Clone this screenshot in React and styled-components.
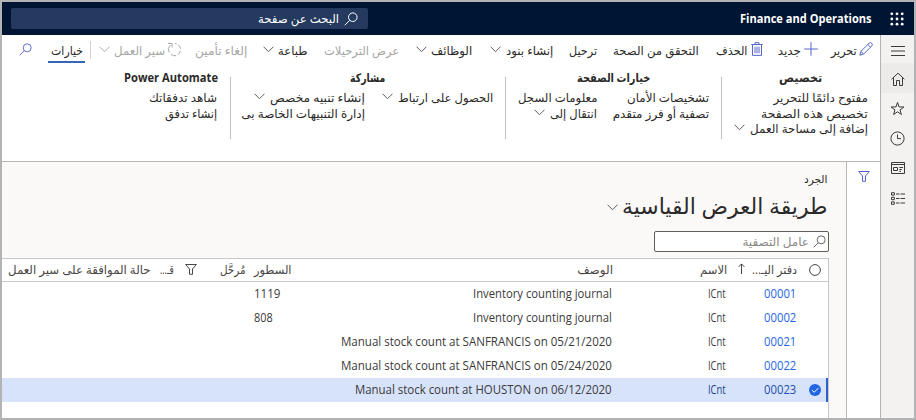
import React, { useLayoutEffect, useRef, useState } from 'react';
import styled, { createGlobalStyle, css } from 'styled-components';

const Global = createGlobalStyle`
  * { box-sizing: border-box; }
  body { margin: 0; background: #fff; overflow: hidden; }
  svg { display: block; flex: none; fill: none; stroke: currentColor; stroke-width: 1; }
`;

/* ---------- text ---------- */
const LabelBox = styled.span`
  display: block;
  flex: none;
  width: ${p => p.$w}px;
  height: 16px;
  line-height: 16px;
  margin-inline-start: ${p => p.$gap || 0}px;
  font-size: ${p => p.$size || 12}px;
  font-weight: ${p => (p.$bold ? 700 : 400)};
  color: ${p => p.$color || 'inherit'};
`;
const LabelText = styled.span`
  display: inline-block;
  white-space: nowrap;
  transform-origin: right center;
`;

function Label({ w, gap, size, bold, color, children }) {
  const ref = useRef(null);
  const [scale, setScale] = useState(1);
  useLayoutEffect(() => {
    const natural = ref.current.offsetWidth;
    if (natural) setScale(w / natural);
  }, [w, children]);
  return (
    <LabelBox $w={w} $gap={gap} $size={size} $bold={bold} $color={color}>
      <LabelText ref={ref} style={{ transform: `scaleX(${scale})` }}>{children}</LabelText>
    </LabelBox>
  );
}

/* ---------- icons ---------- */
const IconSlot = styled.span`
  display: block;
  flex: none;
  margin-inline-start: ${p => p.$gap || 0}px;
  margin-top: ${p => p.$drop || 0}px;
  color: ${p => p.$color || 'inherit'};
`;
const Chevron = ({ gap = 5, drop = -3, color = '#5c5c5c' }) => (
  <IconSlot $gap={gap} $drop={drop} $color={color}>
    <svg width="11" height="7" viewBox="0 0 11 7"><path d="M.5.7 5.5 5.7l5-5" /></svg>
  </IconSlot>
);
const SearchIcon = ({ size = 14 }) => (
  <svg width={size} height={size} viewBox="0 0 14 14"><circle cx="8.8" cy="5.2" r="4.3" /><path d="M5.7 8.3.8 13.2" /></svg>
);
const Pencil = () => (
  <svg width="14" height="14" viewBox="0 0 14 14"><path d="M.8 13.2 1.9 9.4 10 1.3a1.9 1.9 0 0 1 2.7 2.7L4.6 12.1zM1.9 9.4l2.7 2.7M8.8 2.5l2.7 2.7" /></svg>
);
const Plus = () => (
  <svg width="14" height="14" viewBox="0 0 14 14"><path d="M7 .2v13.6M.2 7h13.6" /></svg>
);
const Trash = () => (
  <svg width="12" height="14" viewBox="0 0 12 14"><path d="M.3 2.5h11.4M4 2.5V.7h4v1.8M1.5 2.5v10.9h9V2.5M4 4.7v6.6M6 4.7v6.6M8 4.7v6.6" /></svg>
);
const Cycle = () => (
  <svg width="15" height="15" viewBox="0 0 15 15"><path d="M3.2 3.2a6 6 0 0 0-.9 7.2M4 12.4a6 6 0 0 0 5 1.3M11 12.7a6 6 0 0 0 2.4-4M13.5 6.7A6 6 0 0 0 11 2.6M9.6 1.8 8 1.4M.9 1.4l4.2.1.1 4" /></svg>
);
const Funnel = () => (
  <svg width="12" height="11" viewBox="0 0 12 11"><path d="M.7.5h10.6L7.5 5v5.3h-3V5z" /></svg>
);
const Waffle = () => (
  <svg width="14" height="14" viewBox="0 0 14 14">
    {[1.8, 7, 12.2].map(y => [1.8, 7, 12.2].map(x => <circle key={`${x}-${y}`} cx={x} cy={y} r="1.4" fill="currentColor" stroke="none" />))}
  </svg>
);
const Burger = () => <svg width="14" height="12" viewBox="0 0 14 12"><path d="M0 1.5h14M0 6h14M0 10.5h14" /></svg>;
const Home = () => <svg width="14" height="14" viewBox="0 0 14 14"><path d="M.6 7.2 7 1.2l6.4 6M2.5 5.8v7.7h3v-5h3v5h3V5.8" /></svg>;
const Star = () => <svg width="15" height="15" viewBox="0 0 15 15"><path d="m7.5 1.4 1.5 4.5 4.9.1L10 8.9l1.4 4.6-3.9-2.7-3.9 2.7L5 8.9 1.1 6 6 5.9z" /></svg>;
const Clock = () => <svg width="15" height="15" viewBox="0 0 15 15"><circle cx="7.5" cy="7.5" r="6.6" /><path d="M7.5 3.5v4.1H11" /></svg>;
const Workspace = () => <svg width="14" height="12" viewBox="0 0 14 12"><path d="M.5.5h13v11H.5zM.5 2.5h13M2.5 5.5h4v3h-4zM8.3 5.5H12M8.3 7.5h2.4M8.3 9.3H10" /></svg>;
const Modules = () => <svg width="14" height="13" viewBox="0 0 14 13"><path d="M.5.7h2.8v2.4H.5zM.5 5.3h2.8v2.4H.5zM.5 9.9h2.8v2.4H.5zM5 2h3.6M9.6 2H14M5 6.5h3.6M9.6 6.5H14M5 11h3.6M9.6 11H14" /></svg>;
const SortUp = () => <svg width="7" height="11" viewBox="0 0 7 11"><path d="M3.5 11V1M.6 3.9l2.9-3 2.9 3" /></svg>;
const Radio = () => <svg width="12" height="12" viewBox="0 0 12 12"><circle cx="6" cy="6" r="5.4" /></svg>;
const Checked = () => <svg width="12" height="12" viewBox="0 0 12 12"><circle cx="6" cy="6" r="6" fill="#2266e3" stroke="none" /><path d="m3 6.1 2.2 2.2L9.3 4.1" stroke="#fff" /></svg>;

/* ---------- shell ---------- */
const Frame = styled.div`
  width: 916px;
  height: 420px;
  border: 2px solid #b3b3b3;
  background: #fff;
  color: #2b2a29;
  display: flex;
  flex-direction: column;
  overflow: hidden;
  font-family: 'Open Sans', 'DejaVu Sans', sans-serif;
`;
const NavBar = styled.header`
  height: 33px;
  flex: none;
  display: flex;
  align-items: center;
  padding: 0 10px 0 9px;
  background: #001433;
  color: #fff;
`;
const PageSearch = styled.div`
  width: 357px;
  height: 21px;
  margin-right: auto;
  border-radius: 2px;
  background: #243a5e;
  display: flex;
  align-items: center;
  padding-right: 10px;
`;
const Body = styled.div`
  flex: 1;
  min-height: 0;
  display: flex;
`;
const Workarea = styled.div`
  flex: 1;
  min-width: 0;
  display: flex;
  flex-direction: column;
`;
const SideNav = styled.nav`
  width: 34px;
  flex: none;
  border-left: 1px solid #b5b3b1;
  background: #f3f2f1;
  color: #3b3a39;
`;
const SideItem = styled.div`
  height: ${p => p.$h}px;
  padding-top: ${p => p.$drop || 0}px;
  display: flex;
  align-items: center;
  justify-content: center;
  ${p => p.$active && css`background: #edebe9;`}
`;

/* ---------- action pane ---------- */
const ActionPane = styled.section`
  height: 127px;
  flex: none;
  border-bottom: 1px solid #b8b8b8;
`;
const Toolbar = styled.div`
  height: 31px;
  padding-right: 7px;
  display: flex;
  align-items: center;
`;
const ToolIcon = styled(IconSlot)`
  color: ${p => p.$color || '#5566cc'};
`;
const Divider = styled.i`
  width: 1px;
  height: 18px;
  margin: -2px 8px 0 5px;
  background: #d0d0d0;
`;
const ActiveTab = styled.div`
  width: 37px;
  height: 27px;
  margin-top: -2px;
  padding: 7px 2px 0;
  border-bottom: 2px solid #3564b8;
`;
const Groups = styled.div`
  height: 84px;
  display: flex;
  padding-top: 3px;
`;
const Group = styled.section`
  width: ${p => p.$w}px;
  flex: none;
  height: 62px;
  padding-right: ${p => p.$pad}px;
  margin-top: 8px;
  ${p => p.$line && css`border-left: 1px solid #c0c0c0;`}
`;
const GroupTitle = styled.div`
  height: 21px;
  margin-top: -8px;
  padding-top: 1px;
  padding-right: ${p => p.$pad}px;
`;
const GroupBody = styled.div`
  display: flex;
  padding-right: ${p => p.$inset || 0}px;
`;
const Column = styled.div`
  width: ${p => p.$w}px;
  flex: none;
`;
const Command = styled.div`
  height: 15.7px;
  display: flex;
  align-items: center;
`;

/* ---------- page ---------- */
const Page = styled.div`
  flex: 1;
  min-height: 0;
  display: flex;
`;
const FilterRail = styled.aside`
  width: 34px;
  flex: none;
  border-left: 1px solid #b8b8b8;
  padding: 9px 10px 0 0;
  color: #5566cc;
`;
const Content = styled.main`
  flex: 1;
  min-width: 0;
  padding-right: 17px;
  background: #faf9f8;
  display: flex;
  flex-direction: column;
`;
const Crumb = styled.div`
  padding: 9px 2px 0 0;
  height: 30px;
`;
const Title = styled.h1`
  margin: 0;
  height: 39px;
  padding: 5px 2px 0 0;
  display: flex;
  font-weight: 400;
`;
const QuickFilter = styled.div`
  width: 175px;
  height: 21px;
  flex: none;
  border: 1px solid #605e5c;
  border-radius: 2px;
  background: #fff;
  color: #605e5c;
  display: flex;
  align-items: center;
  padding-right: 2px;
`;
const Grid = styled.div`
  flex: 1;
  margin-top: 6px;
  border-top: 1px solid #c8c8c8;
  border-right: 1px solid #c8c8c8;
  background: #fff;
`;
const gridLine = css`
  display: grid;
  grid-template-columns: 31px 70px 114px 321px 46px 161px 1fr;
  align-items: center;
`;
const HeaderRow = styled.div`
  ${gridLine}
  height: 23px;
  border-bottom: 1px solid #c8c8c8;
  color: #484644;
`;
const Row = styled.div`
  ${gridLine}
  height: 24px;
  color: #3b3a39;
  ${p => p.$selected && css`
    background: #d7e3fb;
    box-shadow: inset -2px 0 0 #2b62c8;
  `}
`;
const Cell = styled.div`
  display: flex;
  align-items: center;
  padding-right: ${p => p.$pad || 0}px;
`;

const GRAY = '#a6a6a6';
const LINK = '#2266e3';

const groups = [
  { title: 'تخصيص', tw: 43, tp: 46, w: 159, pad: 12, line: true, cols: [
    { w: 140, items: [['مفتوح دائمًا للتحرير', 95], ['تخصيص هذه الصفحة', 107], ['إضافة إلى مساحة العمل', 118, true]] }] },
  { title: 'خيارات الصفحة', tw: 73, tp: 59, w: 216, pad: 12, line: true, cols: [
    { w: 112, items: [['تشخيصات الأمان', 82], ['تصفية أو فرز متقدم', 96]] },
    { w: 90, items: [['معلومات السجل', 79], ['انتقال إلى', 47, true]] }] },
  { title: 'مشاركة', tw: 35, tp: 108, w: 275, pad: 12, line: true, cols: [
    { w: 128, items: [['الحصول على ارتباط', 95, true]] },
    { w: 130, items: [['إنشاء تنبيه مخصص', 95, true], ['إدارة التنبيهات الخاصة بى', 124]] }] },
  { title: 'Power Automate', tw: 94, tp: 0, w: 200, pad: 12, inset: 1, cols: [
    { w: 120, items: [['شاهد تدفقاتك', 68], ['إنشاء تدفق', 52]] }] },
];

const rows = [
  ['00001', 'Inventory counting journal', 139, '1119', 26],
  ['00002', 'Inventory counting journal', 139, '808', 19],
  ['00021', 'Manual stock count at SANFRANCIS on 05/21/2020', 271],
  ['00022', 'Manual stock count at SANFRANCIS on 05/24/2020', 271],
  ['00023', 'Manual stock count at HOUSTON on 06/12/2020', 257],
];

export default function App() {
  return (
    <>
      <Global />
      <Frame dir="rtl">
        <NavBar>
          <Waffle />
          <Label w={132} gap={18} size={12} bold>Finance and Operations</Label>
          <PageSearch>
            <SearchIcon />
            <Label w={81} gap={5}>البحث عن صفحة</Label>
          </PageSearch>
        </NavBar>
        <Body>
          <SideNav>
            <SideItem $h={28} $drop={3}><Burger /></SideItem>
            <SideItem $h={30} $drop={1} $active><Home /></SideItem>
            <SideItem $h={30} $drop={1}><Star /></SideItem>
            <SideItem $h={30}><Clock /></SideItem>
            <SideItem $h={29}><Workspace /></SideItem>
            <SideItem $h={31} $drop={2}><Modules /></SideItem>
          </SideNav>
          <Workarea>
            <ActionPane>
              <Toolbar>
                <ToolIcon $drop={-3}><Pencil /></ToolIcon>
                <Label w={26} gap={2}>تحرير</Label>
                <ToolIcon $gap={13} $drop={-3}><Plus /></ToolIcon>
                <Label w={23} gap={3}>جديد</Label>
                <ToolIcon $gap={15} $drop={-3}><Trash /></ToolIcon>
                <Label w={31} gap={4}>الحذف</Label>
                <Label w={86} gap={17}>التحقق من الصحة</Label>
                <Label w={28} gap={16}>ترحيل</Label>
                <Label w={47} gap={16}>إنشاء بنود</Label>
                <Chevron />
                <Label w={41} gap={18}>الوظائف</Label>
                <Chevron gap={4} />
                <Label w={75} gap={17} color={GRAY}>عرض الترحيلات</Label>
                <Label w={29} gap={17}>طباعة</Label>
                <Chevron gap={4} />
                <Label w={52} gap={16} color={GRAY}>إلغاء تأمين</Label>
                <ToolIcon $gap={13} $drop={-3} $color={GRAY}><Cycle /></ToolIcon>
                <Label w={51} gap={2} color={GRAY}>سير العمل</Label>
                <Chevron gap={4} color="#b0b0b0" />
                <Divider />
                <ActiveTab><Label w={32}>خيارات</Label></ActiveTab>
                <ToolIcon $gap={16} $drop={-3}><SearchIcon size={13} /></ToolIcon>
              </Toolbar>
              <Groups>
                {groups.map(g => (
                  <Group key={g.title} $w={g.w} $pad={g.pad} $line={g.line}>
                    <GroupTitle $pad={g.tp}><Label w={g.tw} bold>{g.title}</Label></GroupTitle>
                    <GroupBody $inset={g.inset}>
                      {g.cols.map((c, i) => (
                        <Column key={i} $w={c.w}>
                          {c.items.map(([text, w, menu]) => (
                            <Command key={text}>
                              <Label w={w}>{text}</Label>
                              {menu && <Chevron />}
                            </Command>
                          ))}
                        </Column>
                      ))}
                    </GroupBody>
                  </Group>
                ))}
              </Groups>
            </ActionPane>
            <Page>
              <FilterRail><Funnel /></FilterRail>
              <Content>
                <Crumb><Label w={23} size={11}>الجرد</Label></Crumb>
                <Title>
                  <Label w={205} size={22}>طريقة العرض القياسية</Label>
                  <Chevron gap={4} drop={7} />
                </Title>
                <QuickFilter>
                  <SearchIcon size={13} />
                  <Label w={67} gap={4} color="#8a8886">عامل التصفية</Label>
                </QuickFilter>
                <Grid>
                  <HeaderRow>
                    <Cell $pad={7}><Radio /></Cell>
                    <Cell><Label w={45}>دفتر اليـ...</Label><IconSlot $gap={7} $drop={-3}><SortUp /></IconSlot></Cell>
                    <Cell><Label w={27}>الاسم</Label></Cell>
                    <Cell><Label w={36}>الوصف</Label></Cell>
                    <Cell><Label w={38}>السطور</Label></Cell>
                    <Cell>
                      <Label w={26}>مُرحَّل</Label>
                      <IconSlot $gap={23} $drop={-1}><Funnel /></IconSlot>
                      <Label w={14} gap={11}>قـ...</Label>
                    </Cell>
                    <Cell><Label w={143} gap={-66}>حالة الموافقة على سير العمل</Label></Cell>
                  </HeaderRow>
                  {rows.map(([id, desc, dw, count, cw], i) => (
                    <Row key={id} $selected={i === 4}>
                      <Cell $pad={7}>{i === 4 && <Checked />}</Cell>
                      <Cell $pad={1}><Label w={32} color={i === 4 ? '#1d4fb0' : LINK}>{id}</Label></Cell>
                      <Cell $pad={1}><Label w={18} color={i === 4 ? '#1d3f86' : undefined}>ICnt</Label></Cell>
                      <Cell $pad={1}><Label w={dw}>{desc}</Label></Cell>
                      <Cell $pad={count ? 38 - cw : 0}>{count && <Label w={cw}>{count}</Label>}</Cell>
                    </Row>
                  ))}
                </Grid>
              </Content>
            </Page>
          </Workarea>
        </Body>
      </Frame>
    </>
  );
}
